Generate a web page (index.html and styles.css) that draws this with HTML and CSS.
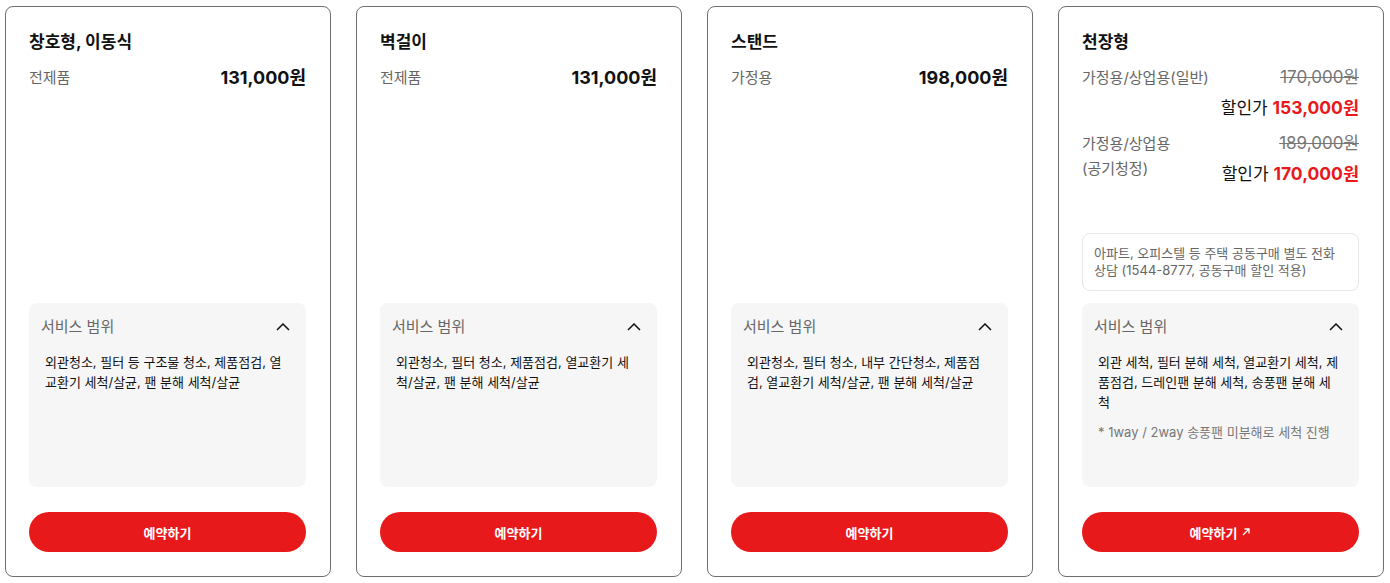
FILE: index.html
```html
<!DOCTYPE html>
<html lang="ko">
<head>
<meta charset="utf-8">
<link rel="stylesheet" href="styles.css">
</head>
<body>
<div class="cards">
  <div class="card">
    <div class="top">
      <h2 class="title">창호형, 이동식</h2>
      <div class="row"><span class="label">전제품</span><span class="price">131,000원</span></div>
    </div>
    <div class="scope">
      <div class="scope-head"><span>서비스 범위</span><svg class="chev" width="14" height="8" viewBox="0 0 14 8"><path d="M1 7 L7 1 L13 7" fill="none" stroke="#111" stroke-width="1.5"/></svg></div>
      <p class="scope-text">외관청소, 필터 등 구조물 청소, 제품점검, 열교환기 세척/살균, 팬 분해 세척/살균</p>
    </div>
    <button class="btn">예약하기</button>
  </div>
  <div class="card">
    <div class="top">
      <h2 class="title">벽걸이</h2>
      <div class="row"><span class="label">전제품</span><span class="price">131,000원</span></div>
    </div>
    <div class="scope">
      <div class="scope-head"><span>서비스 범위</span><svg class="chev" width="14" height="8" viewBox="0 0 14 8"><path d="M1 7 L7 1 L13 7" fill="none" stroke="#111" stroke-width="1.5"/></svg></div>
      <p class="scope-text">외관청소, 필터 청소, 제품점검, 열교환기 세척/살균, 팬 분해 세척/살균</p>
    </div>
    <button class="btn">예약하기</button>
  </div>
  <div class="card">
    <div class="top">
      <h2 class="title">스탠드</h2>
      <div class="row"><span class="label">가정용</span><span class="price">198,000원</span></div>
    </div>
    <div class="scope">
      <div class="scope-head"><span>서비스 범위</span><svg class="chev" width="14" height="8" viewBox="0 0 14 8"><path d="M1 7 L7 1 L13 7" fill="none" stroke="#111" stroke-width="1.5"/></svg></div>
      <p class="scope-text">외관청소, 필터 청소, 내부 간단청소, 제품점검, 열교환기 세척/살균, 팬 분해 세척/살균</p>
    </div>
    <button class="btn">예약하기</button>
  </div>
  <div class="card">
    <div class="top">
      <h2 class="title">천장형</h2>
      <div class="row">
        <span class="label">가정용/상업용(일반)</span>
        <div class="prices"><span class="old">170,000원</span><span class="sale">할인가 <b>153,000원</b></span></div>
      </div>
      <div class="row row2">
        <span class="label">가정용/상업용<br>(공기청정)</span>
        <div class="prices"><span class="old">189,000원</span><span class="sale">할인가 <b>170,000원</b></span></div>
      </div>
    </div>
    <div class="note">아파트, 오피스텔 등 주택 공동구매 별도 전화 상담 (1544-8777, 공동구매 할인 적용)</div>
    <div class="scope">
      <div class="scope-head"><span>서비스 범위</span><svg class="chev" width="14" height="8" viewBox="0 0 14 8"><path d="M1 7 L7 1 L13 7" fill="none" stroke="#111" stroke-width="1.5"/></svg></div>
      <p class="scope-text">외관 세척, 필터 분해 세척, 열교환기 세척, 제품점검, 드레인팬 분해 세척, 송풍팬 분해 세척</p>
      <p class="scope-sub">* 1way / 2way 송풍팬 미분해로 세척 진행</p>
    </div>
    <button class="btn">예약하기 <svg class="arrow" width="10" height="10" viewBox="0 0 10 10"><path d="M2 8 L8 2 M3.5 2 H8 V6.5" fill="none" stroke="#fff" stroke-width="1.3"/></svg></button>
  </div>
</div>
</body>
</html>
```
FILE: styles.css
```css
* { box-sizing: border-box; }
html, body { margin: 0; padding: 0; background: #fff; }
body {
  font-family: Inter, "Noto Sans CJK KR", sans-serif;
  color: #111;
  padding: 6px 6px 6px 5px;
}
.cards {
  display: grid;
  grid-template-columns: repeat(4, minmax(0, 1fr));
  gap: 25px;
}
.card {
  border: 1px solid #6e6e6e;
  border-radius: 8px;
  height: 571px;
  padding: 23px 24px 24px 23px;
  display: flex;
  flex-direction: column;
  min-width: 0;
}
.top { flex: 1; }
.title {
  margin: 0;
  font-size: 17px;
  font-weight: 700;
  line-height: 24px;
  color: #111;
}
.row {
  display: flex;
  justify-content: space-between;
  align-items: flex-start;
  margin-top: 11px;
}
.row2 { margin-top: 10px; }
.label {
  font-size: 15px;
  line-height: 25px;
  color: #666;
}
.price {
  font-size: 18px;
  font-weight: 700;
  line-height: 25px;
  color: #111;
}
.prices {
  display: flex;
  flex-direction: column;
  align-items: flex-end;
}
.old {
  font-size: 17px;
  line-height: 25px;
  color: #777;
  text-decoration: line-through;
}
.sale {
  font-size: 17px;
  line-height: 25px;
  margin-top: 5px;
  color: #111;
}
.sale b { color: #e8191a; font-weight: 700; font-size: 17.5px; }
.note {
  border: 1px solid #e6e6e6;
  border-radius: 8px;
  padding: 11px 11px;
  font-size: 13px;
  line-height: 17px;
  color: #666;
  margin-bottom: 12px;
}
.scope {
  background: #f6f6f6;
  border-radius: 8px;
  height: 184px;
  padding: 13px 16px 12px 12px;
}
.scope-head {
  display: flex;
  justify-content: space-between;
  align-items: center;
  font-size: 15px;
  line-height: 22px;
  color: #666;
}
.scope-text {
  margin: 14px 2px 0 4px;
  font-size: 13px;
  line-height: 20px;
  color: #111;
}
.scope-sub {
  margin: 10px 0 0 4px;
  font-size: 13px;
  line-height: 20px;
  color: #777;
}
.btn {
  margin-top: 25px;
  height: 40px;
  border: none;
  border-radius: 20px;
  background: #e8191a;
  color: #fff;
  font-family: inherit;
  font-size: 13px;
  font-weight: 700;
  display: flex;
  align-items: center;
  justify-content: center;
  gap: 4px;
  flex-shrink: 0;
}
.arrow { display: block; }
```
